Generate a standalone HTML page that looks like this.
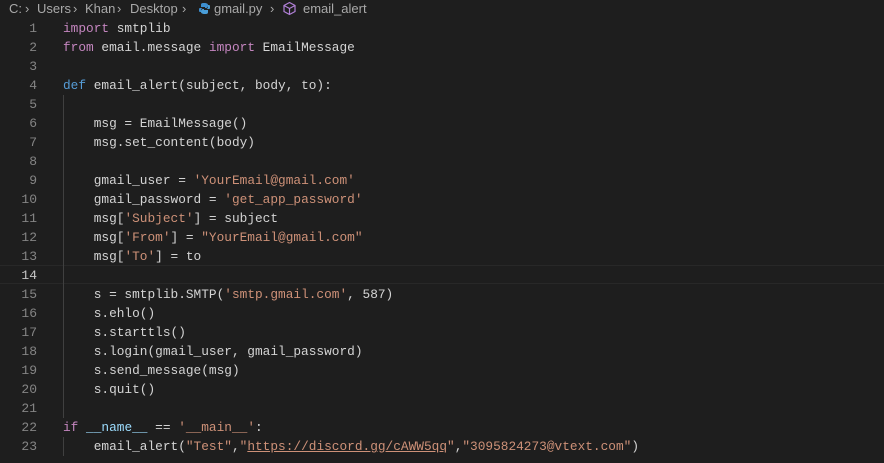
<!DOCTYPE html>
<html><head><style>
body{margin:0;width:884px;height:463px;background:#1e1e1e;overflow:hidden;position:relative;font-family:"Liberation Mono",monospace;}
.bc{position:absolute;top:0;height:18px;font:13px "Liberation Sans",sans-serif;color:#a9a9a9;line-height:17px;white-space:nowrap}
.ln{position:absolute;left:0;width:37px;text-align:right;color:#858585;font-size:13px;line-height:19px}
.cd{position:absolute;left:63px;color:#d4d4d4;font-size:12.8px;line-height:19px;white-space:pre}
.k{color:#c586c0}.d{color:#569cd6}.s{color:#ce9178}.v{color:#9cdcfe}.n{color:#b5cea8}
.cur{position:absolute;left:0;width:884px;top:265px;height:17px;border-top:1px solid #282828;border-bottom:1px solid #282828}
.g{position:absolute;left:63px;width:1px;background:#404040}
</style></head><body>
<div class="bc" style="left:9px">C:</div>
<div class="bc" style="left:25px">›</div>
<div class="bc" style="left:37px">Users</div>
<div class="bc" style="left:73px">›</div>
<div class="bc" style="left:85px">Khan</div>
<div class="bc" style="left:117px">›</div>
<div class="bc" style="left:130px">Desktop</div>
<div class="bc" style="left:182px">›</div>
<svg style="position:absolute;left:198px;top:2px" width="13" height="13" viewBox="0 0 13 13"><path d="M6 1C3 1 3 2 3 3v2h4v1H2C1 6 1 7 1 8s0 2 1 2h1V8c0-1 1-2 2-2h3c1 0 2-1 2-2V3c0-1-1-2-4-2z" fill="#3d8fd0"/><path d="M7 12c3 0 3-1 3-2V8H6V7h5c1 0 1-1 1-2s0-2-1-2h-1v2c0 1-1 2-2 2H5C4 7 3 8 3 9v1c0 1 1 2 4 2z" fill="#4a9ed8"/></svg>
<div class="bc" style="left:214px">gmail.py</div>
<div class="bc" style="left:270px">›</div>
<svg style="position:absolute;left:282px;top:1px" width="15" height="15" viewBox="0 0 15 15" fill="none" stroke="#b180d7" stroke-width="1.2"><path d="M7.5 1.5l5.5 3v6l-5.5 3-5.5-3v-6z M2 4.5l5.5 3 5.5-3 M7.5 7.5v6"/></svg>
<div class="bc" style="left:303px">email_alert</div>

<div class="cur"></div>
<div class="g" style="top:95px;height:323px"></div>
<div class="g" style="top:437px;height:19px"></div>

<div class="ln" style="top:19px">1<br>2<br>3<br>4<br>5<br>6<br>7<br>8<br>9<br>10<br>11<br>12<br>13<br><span style="color:#c6c6c6">14</span><br>15<br>16<br>17<br>18<br>19<br>20<br>21<br>22<br>23</div>
<div class="cd" style="top:19px"><span class="k">import</span> smtplib
<span class="k">from</span> email.message <span class="k">import</span> EmailMessage

<span class="d">def</span> email_alert(subject, body, to):

    msg = EmailMessage()
    msg.set_content(body)

    gmail_user = <span class="s">'YourEmail@gmail.com'</span>
    gmail_password = <span class="s">'get_app_password'</span>
    msg[<span class="s">'Subject'</span>] = subject
    msg[<span class="s">'From'</span>] = <span class="s">"YourEmail@gmail.com"</span>
    msg[<span class="s">'To'</span>] = to

    s = smtplib.SMTP(<span class="s">'smtp.gmail.com'</span>, 587)
    s.ehlo()
    s.starttls()
    s.login(gmail_user, gmail_password)
    s.send_message(msg)
    s.quit()

<span class="k">if</span> <span class="v">__name__</span> == <span class="s">'__main__'</span>:
    email_alert(<span class="s">"Test"</span>,<span class="s">"<u>https://discord.gg/cAWW5qq</u>"</span>,<span class="s">"3095824273@vtext.com"</span>)</div>
</body></html>
